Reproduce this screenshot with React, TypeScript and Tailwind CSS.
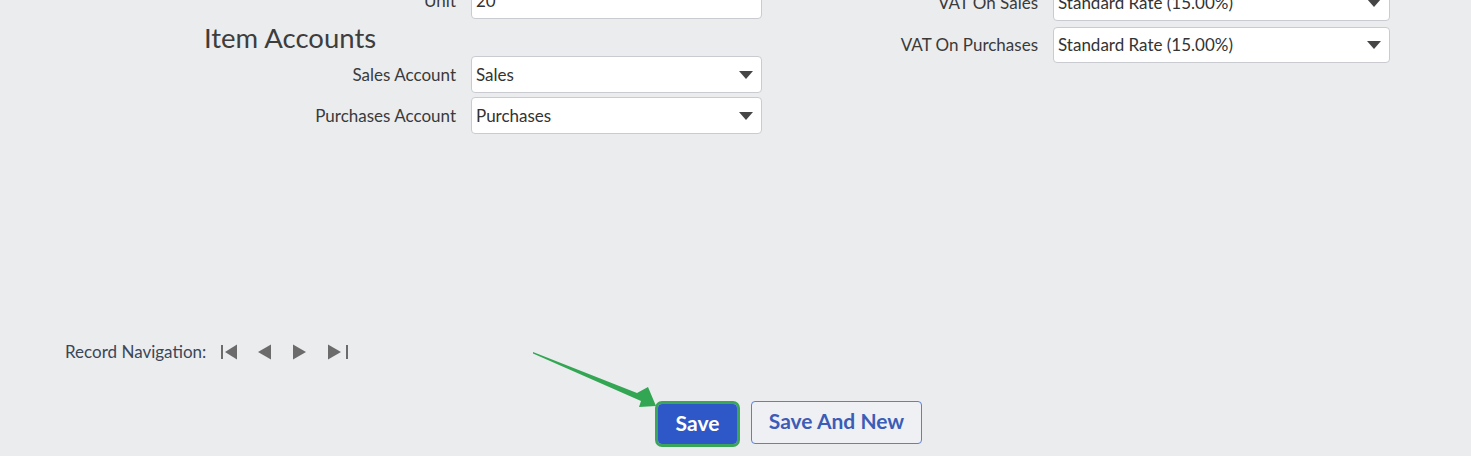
const font = { fontFamily: "Lato, 'Noto Sans', sans-serif" };

function Caret() {
  return (
    <svg width="14" height="8" viewBox="0 0 14 8" className="shrink-0">
      <path d="M0 0 H14 L7 8 Z" fill="#454545" />
    </svg>
  );
}

function Field({
  label,
  value,
  labelW,
  inputW,
  h,
  select,
}: {
  label: string;
  value: string;
  labelW: string;
  inputW: string;
  h: string;
  select?: boolean;
}) {
  return (
    <div className={`flex items-center ${h}`}>
      <div className={`${labelW} text-right text-[17px] text-[#3a3a3a] pr-[15px]`}>
        {label}
      </div>
      <div
        className={`${inputW} h-full flex items-center justify-between bg-white border border-[#c9cbd0] rounded-[4px] pl-[4px] pr-[8px] text-[17px] text-[#333]`}
      >
        <span>{value}</span>
        {select && <Caret />}
      </div>
    </div>
  );
}

function NavIcons() {
  return (
    <svg width="130" height="16" viewBox="0 0 130 16" className="ml-[14px]">
      <g fill="#6b6b6b">
        <rect x="1" y="1" width="2" height="14" />
        <path d="M17 0.5 V15.5 L5 8 Z" />
        <path d="M51 0.5 V15.5 L38 8 Z" />
        <path d="M73 0.5 V15.5 L86 8 Z" />
        <path d="M108 0.5 V15.5 L121 8 Z" />
        <rect x="126" y="1" width="2" height="14" />
      </g>
    </svg>
  );
}

export default function App() {
  return (
    <div className="relative w-full h-[456px] overflow-hidden bg-[#ebecee]" style={font}>
      <div className="flex pl-[204px] -mt-[18px]">
        {/* left column */}
        <div className="flex flex-col w-[558px]">
          <Field label="Unit" value="20" labelW="w-[267px]" inputW="w-[291px]" h="h-[37px]" />
          <div className="mt-[2px] h-[34px] leading-[34px] text-[27.5px] text-[#3d3d3d]">
            Item Accounts
          </div>
          <div className="mt-[1px] flex flex-col gap-[4px]">
            <Field label="Sales Account" value="Sales" labelW="w-[267px]" inputW="w-[291px]" h="h-[37px]" select />
            <Field label="Purchases Account" value="Purchases" labelW="w-[267px]" inputW="w-[291px]" h="h-[37px]" select />
          </div>
        </div>

        {/* right column */}
        <div className="ml-[118px] mt-[3px] flex flex-col gap-[6px]">
          <Field label="VAT On Sales" value="Standard Rate (15.00%)" labelW="w-[173px]" inputW="w-[337px]" h="h-[36px]" select />
          <Field label="VAT On Purchases" value="Standard Rate (15.00%)" labelW="w-[173px]" inputW="w-[337px]" h="h-[36px]" select />
        </div>
      </div>

      {/* record navigation */}
      <div className="flex items-center pl-[65px] mt-[206px] h-[24px]">
        <span className="text-[17px] text-[#3b4658]">Record Navigation:</span>
        <NavIcons />
      </div>

      {/* actions */}
      <div className="flex items-start gap-[11px] pl-[655px] mt-[37px]">
        <div className="border-[3px] border-[#3ba65a] rounded-[7px]">
          <button className="w-[79px] h-[40px] pb-[4px] bg-[#2e57c7] rounded-[4px] text-white text-[21px] font-bold leading-none">
            Save
          </button>
        </div>
        <button className="w-[171px] h-[43px] pb-[4px] border border-[#5b7fd6] rounded-[4px] bg-[#eff0f3] text-[#3b5cb7] text-[21px] font-bold leading-none">
          Save And New
        </button>
      </div>

      {/* annotation arrow */}
      <svg className="absolute left-[525px] top-[345px]" width="140" height="65" viewBox="0 0 140 65">
        <path d="M8 7 L112 48 L123 42 L131 61 L114 62 L116 56 L8 8.5 Z" fill="#33a654" />
      </svg>
    </div>
  );
}
